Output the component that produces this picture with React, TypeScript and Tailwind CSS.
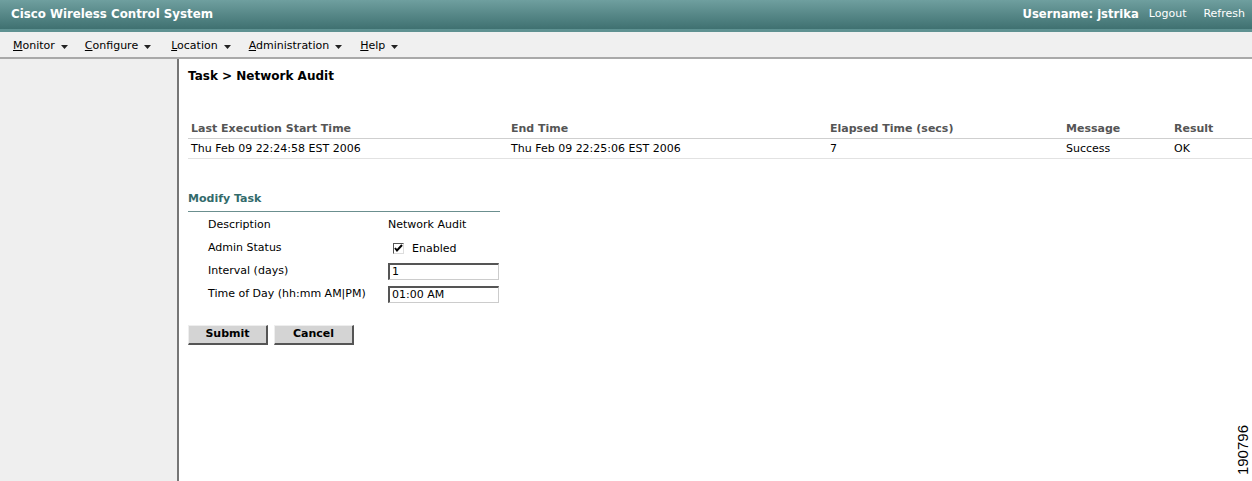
import { useState } from "react";

const menus = [
    { label: "Monitor", key: "M", rest: "onitor", mr: "mr-[17px]" },
    { label: "Configure", key: "C", rest: "onfigure", mr: "mr-[20px]" },
    { label: "Location", key: "L", rest: "ocation", mr: "mr-[18px]" },
    { label: "Administration", key: "A", rest: "dministration", mr: "mr-[18px]" },
    { label: "Help", key: "H", rest: "elp", mr: "mr-[16px]" },
]

const cols = [
    { head: "Last Execution Start Time", value: "Thu Feb 09 22:24:58 EST 2006", w: "w-[320px]" },
    { head: "End Time", value: "Thu Feb 09 22:25:06 EST 2006", w: "w-[319px]" },
    { head: "Elapsed Time (secs)", value: "7", w: "w-[236px]" },
    { head: "Message", value: "Success", w: "w-[108px]" },
    { head: "Result", value: "OK", w: "flex-1" },
]

function Caret() {
    return (
        <svg width="7" height="4" viewBox="0 0 7 4" className="ml-[6px]">
            <path d="M0 0h7L3.5 4z" fill="#222" />
        </svg>
    )
}

const inputCls = "w-[111px] h-[17px] px-[2px] text-[11px] border border-t-2 border-l-2 border-t-[#555] border-l-[#555] border-b-[#ccc] border-r-[#ccc] outline-none"
const btnCls = "w-[80px] h-[20px] bg-[#d4d4d4] font-bold border border-t-[#eee] border-l-[#eee] border-b-2 border-r-2 border-b-[#555] border-r-[#555]"

export default function App() {
    const [enabled, setEnabled] = useState(true)
    const [interval, setInterval] = useState("1")
    const [time, setTime] = useState("01:00 AM")

    return (
        <div className="relative w-[1252px] h-[481px] overflow-hidden flex flex-col bg-white text-[11px] text-black font-['DejaVu_Sans','Verdana',sans-serif]">
            <div className="h-[29px] shrink-0 flex items-center justify-between px-[11px] bg-gradient-to-b from-[#6f9f9f] to-[#3f7171] text-white">
                <span className="font-bold text-[11.8px]">Cisco Wireless Control System</span>
                <div className="flex items-center">
                    <span className="font-bold text-[11.6px]">Username: jstrika</span>
                    <span className="ml-[10px]">Logout</span>
                    <span className="ml-[17px] mr-[-4px]">Refresh</span>
                </div>
            </div>
            <div className="h-[3px] shrink-0 bg-[#5f9292]" />
            <div className="h-[27px] shrink-0 flex items-center pt-[4px] pl-[13px] bg-[#f0f0f0] border-b-2 border-[#a9a9a9]">
                {menus.map(m => (
                    <div key={m.label} className={`flex items-center ${m.mr}`}>
                        <span><span className="underline">{m.key}</span>{m.rest}</span>
                        <Caret />
                    </div>
                ))}
            </div>
            <div className="flex flex-1 min-h-0">
                <div className="w-[179px] shrink-0 bg-[#efefef] border-r-2 border-[#767676]" />
                <div className="flex-1 pl-[9px] pt-[9px]">
                    <div className="font-bold text-[12px] h-[16px] leading-[16px]">Task &gt; Network Audit</div>
                    <div className="mt-[37px]">
                        <div className="flex h-[18px] items-center border-b border-[#cfcfcf] pl-[3px] font-bold text-[#555]">
                            {cols.map(c => <div key={c.head} className={c.w}>{c.head}</div>)}
                        </div>
                        <div className="flex h-[20px] items-center pt-[1px] border-b border-[#e2e2e2] pl-[3px]">
                            {cols.map(c => <div key={c.head} className={c.w}>{c.value}</div>)}
                        </div>
                    </div>
                    <div className="mt-[32px] w-[312px]">
                        <div className="font-bold text-[#336b6b] pb-[3px] border-b border-[#6b8f8f]">Modify Task</div>
                        <div className="pl-[20px] pt-[3px] flex flex-col">
                            <div className="flex items-center h-[22px]">
                                <div className="w-[180px]">Description</div>
                                <div>Network Audit</div>
                            </div>
                            <div className="flex items-center h-[23px]">
                                <div className="w-[180px]">Admin Status</div>
                                <label className="flex items-center">
                                    <span
                                        onClick={() => setEnabled(!enabled)}
                                        className="ml-[5px] w-[11px] h-[11px] border border-t-[#555] border-l-[#555] border-b-[#ddd] border-r-[#ddd] bg-white flex items-center justify-center"
                                    >
                                        {enabled && (
                                            <svg width="9" height="9" viewBox="0 0 9 9">
                                                <path d="M1 4l2 2.5L8 1" stroke="#000" strokeWidth="2" fill="none" />
                                            </svg>
                                        )}
                                    </span>
                                    <span className="ml-[8px] mt-[2px]">Enabled</span>
                                </label>
                            </div>
                            <div className="flex items-center h-[23px]">
                                <div className="w-[180px]">Interval (days)</div>
                                <input value={interval} onChange={e => setInterval(e.target.value)} className={inputCls} />
                            </div>
                            <div className="flex items-center h-[23px]">
                                <div className="w-[180px]">Time of Day (hh:mm AM|PM)</div>
                                <input value={time} onChange={e => setTime(e.target.value)} className={inputCls} />
                            </div>
                        </div>
                        <div className="flex gap-[6px] mt-[19px]">
                            <button className={btnCls}>Submit</button>
                            <button className={btnCls}>Cancel</button>
                        </div>
                    </div>
                </div>
            </div>
            <div className="absolute right-[2px] bottom-[6px] [writing-mode:vertical-rl] rotate-180 text-[15px] leading-[15px] font-['Liberation_Sans',sans-serif]">190796</div>
        </div>
    )
}
